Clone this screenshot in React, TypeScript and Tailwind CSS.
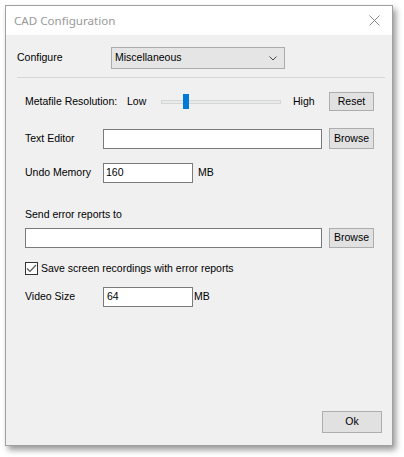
import React from "react";

const body = { fontFamily: '"Liberation Sans", Arial, sans-serif' };

function Button({ label, className = "" }: { label: string; className?: string }) {
  return (
    <div
      className={`flex items-center justify-center bg-[#e1e1e1] border border-[#adadad] text-[10.5px] text-black ${className}`}
    >
      {label}
    </div>
  );
}

function TextBox({ value = "", className = "" }: { value?: string; className?: string }) {
  return (
    <div
      className={`flex items-center bg-white border border-[#7a7a7a] pl-[2px] text-[10.5px] text-black ${className}`}
    >
      {value}
    </div>
  );
}

export default function App() {
  return (
    <div className="w-[404px] h-[457px] bg-white pl-[5px] pt-[5px]" style={body}>
      <div className="w-[388px] h-[441px] flex flex-col border border-[#a0a0a0] bg-[#f0f0f0] shadow-[3px_4px_6px_rgba(0,0,0,0.4)]">
        {/* Title bar */}
        <div className="h-[29px] shrink-0 bg-white flex items-center justify-between pl-[8px] pr-[12px]">
          <span
            className="text-[11.6px] text-[#999999]"
            style={{ fontFamily: '"Noto Sans", "Open Sans", sans-serif' }}
          >
            CAD Configuration
          </span>
          <svg width="11" height="11" viewBox="0 0 11 11">
            <path d="M0.5 0.5 L10.5 10.5 M10.5 0.5 L0.5 10.5" stroke="#8a8a8a" strokeWidth="1" />
          </svg>
        </div>

        {/* Content */}
        <div className="flex-1 flex flex-col text-[10.5px] text-black">
          {/* Configure */}
          <div className="mt-[12px] ml-[11px] h-[22px] flex items-center">
            <span className="w-[94px]">Configure</span>
            <div className="w-[174px] h-[22px] flex items-center justify-between bg-[#e5e5e5] border border-[#acacac] pl-[3px] pr-[7px]">
              <span>Miscellaneous</span>
              <svg width="8" height="5" viewBox="0 0 8 5">
                <path d="M0.5 0.5 L4 4 L7.5 0.5" stroke="#444" strokeWidth="1" fill="none" />
              </svg>
            </div>
          </div>

          <div className="mt-[8px] ml-[11px] w-[368px] h-px bg-[#d7d7d7]" />

          {/* Slider row */}
          <div className="mt-[14px] ml-[19px] h-[19px] flex items-center">
            <span className="w-[102px]">Metafile Resolution:</span>
            <span className="w-[34px]">Low</span>
            <div className="relative w-[120px] h-[4px] bg-[#e7eaea] border border-[#d6d6d6]">
              <div className="absolute left-[21px] top-[-7px] w-[6px] h-[15px] bg-[#007ad9]" />
            </div>
            <span className="ml-[12px] w-[36px]">High</span>
            <Button label="Reset" className="w-[45px] h-[19px]" />
          </div>

          {/* Text Editor */}
          <div className="mt-[17px] ml-[19px] h-[21px] flex items-center">
            <span className="w-[78px]">Text Editor</span>
            <TextBox className="w-[219px] h-[20px]" />
            <Button label="Browse" className="ml-[7px] w-[45px] h-[21px]" />
          </div>

          {/* Undo Memory */}
          <div className="mt-[14px] ml-[19px] h-[20px] flex items-center">
            <span className="w-[78px]">Undo Memory</span>
            <TextBox value="160" className="w-[90px] h-[20px]" />
            <span className="ml-[5px]">MB</span>
          </div>

          {/* Send error reports */}
          <div className="mt-[25px] ml-[19px] h-[14px] flex items-center">Send error reports to</div>
          <div className="mt-[6px] ml-[19px] h-[20px] flex items-center">
            <TextBox className="w-[297px] h-[20px]" />
            <Button label="Browse" className="ml-[7px] w-[45px] h-[20px]" />
          </div>

          {/* Checkbox */}
          <div className="mt-[14px] ml-[19px] h-[13px] flex items-center">
            <div className="w-[13px] h-[13px] bg-white border border-[#333333] flex items-center justify-center">
              <svg width="11" height="9" viewBox="0 0 11 9">
                <path d="M1 4.5 L4 7.5 L10 1" stroke="#555" strokeWidth="1.2" fill="none" />
              </svg>
            </div>
            <span className="ml-[3px]">Save screen recordings with error reports</span>
          </div>

          {/* Video Size */}
          <div className="mt-[12px] ml-[19px] h-[20px] flex items-center">
            <span className="w-[78px]">Video Size</span>
            <TextBox value="64" className="w-[90px] h-[20px] pl-[3px]" />
            <span className="ml-[1px]">MB</span>
          </div>

          {/* Ok */}
          <div className="mt-auto mb-[12px] mr-[10px] flex justify-end">
            <Button label="Ok" className="w-[60px] h-[22px]" />
          </div>
        </div>
      </div>
    </div>
  );
}
